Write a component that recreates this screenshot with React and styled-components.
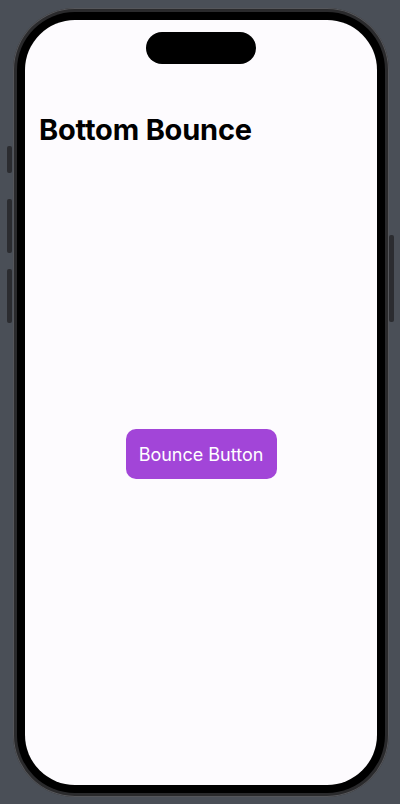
import React from "react";
import styled, { createGlobalStyle } from "styled-components";

const Global = createGlobalStyle`
  html, body { margin: 0; padding: 0; background: #4a4f57; }
  body { width: 400px; height: 804px; overflow: hidden; font-family: Inter, "Noto Sans", sans-serif; }
`;

const Stage = styled.div`
  width: 400px;
  height: 804px;
  padding: 8px 0 0 13px;
  box-sizing: border-box;
`;

const Phone = styled.div`
  position: relative;
  width: 376px;
  height: 789px;
  box-sizing: border-box;
  border-radius: 62px;
  background: #2a2a2c;
  padding: 4px;
  box-shadow: inset 0 0 0 1px #55565a;
`;

const SideButton = styled.div`
  position: absolute;
  top: ${(p) => p.$top}px;
  height: ${(p) => p.$h}px;
  width: 5px;
  background: #2b2c30;
  border-radius: 2px;
  ${(p) => (p.$right ? "right: -5px;" : "left: -6px;")}
`;

const Bezel = styled.div`
  width: 100%;
  height: 100%;
  box-sizing: border-box;
  border-radius: 58px;
  background: #000;
  padding: 8px;
`;

const Screen = styled.div`
  width: 100%;
  height: 100%;
  border-radius: 50px;
  background: #fdfbfe;
  overflow: hidden;
  display: flex;
  flex-direction: column;
`;

const Island = styled.div`
  align-self: center;
  width: 110px;
  height: 32px;
  margin-top: 12px;
  border-radius: 16px;
  background: #000;
`;

const Title = styled.h1`
  margin: 49px 0 0 14px;
  font-family: Inter, "Noto Sans", sans-serif;
  font-weight: 700;
  font-size: 29px;
  line-height: 34px;
  color: #000;
  letter-spacing: -0.2px;
`;

const Button = styled.button`
  align-self: center;
  margin-top: 282px;
  width: 151px;
  height: 50px;
  border: none;
  border-radius: 10px;
  background: #a245d8;
  color: #fff;
  font-family: Inter, "Noto Sans", sans-serif;
  font-size: 18px;
  font-weight: 400;
  padding: 0;
  cursor: pointer;
`;

export default function App() {
  return (
    <>
      <Global />
      <Stage>
        <Phone>
          <SideButton $top={138} $h={27} />
          <SideButton $top={191} $h={54} />
          <SideButton $top={261} $h={54} />
          <SideButton $right $top={227} $h={87} />
          <Bezel>
            <Screen>
              <Island />
              <Title>Bottom Bounce</Title>
              <Button>Bounce Button</Button>
            </Screen>
          </Bezel>
        </Phone>
      </Stage>
    </>
  );
}
